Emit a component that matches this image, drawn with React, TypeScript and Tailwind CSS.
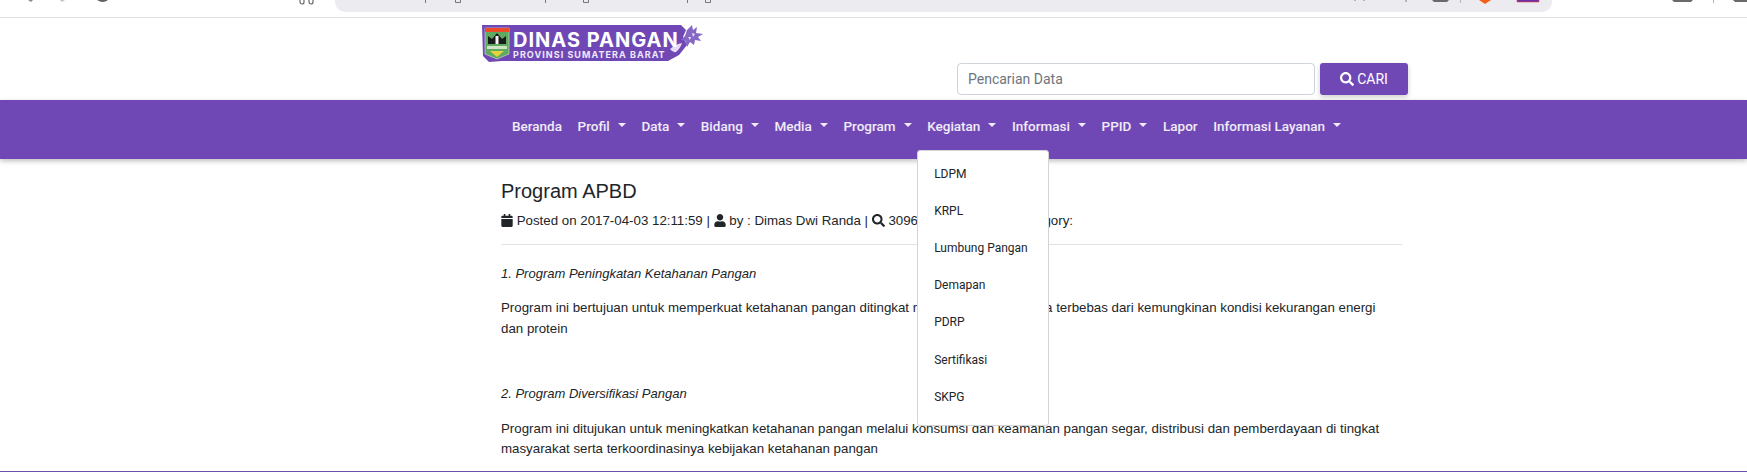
import React from 'react';
import { FaCalendar, FaUser, FaSearch } from 'react-icons/fa';

const navItems = [
  { label: 'Beranda', caret: false },
  { label: 'Profil', caret: true },
  { label: 'Data', caret: true },
  { label: 'Bidang', caret: true },
  { label: 'Media', caret: true },
  { label: 'Program', caret: true },
  { label: 'Kegiatan', caret: true, open: true },
  { label: 'Informasi', caret: true },
  { label: 'PPID', caret: true },
  { label: 'Lapor', caret: false },
  { label: 'Informasi Layanan', caret: true },
];

const kegiatan = ['LDPM', 'KRPL', 'Lumbung Pangan', 'Demapan', 'PDRP', 'Sertifikasi', 'SKPG'];

// toolbar icons of the browser, only their lower edge is in the picture
function ChromeBits() {
  return (
    <svg width="1747" height="17" viewBox="0 0 1747 17" className="absolute left-0 top-0">
      <path d="M28 0h5l-2 2z" fill="#8a8a8a" />
      <path d="M60 0h5l-3 2z" fill="#c4c4c4" />
      <path d="M97 0h11q-5 4-11 0z" fill="#5f6368" />
      <path d="M300 0v2a2 2 0 0 0 4 0v-2M309 0v2a2 2 0 0 0 4 0v-2" fill="none" stroke="#6b6b6b" strokeWidth="1.2" />
      <g fill="none" stroke="#777" strokeWidth="1">
        <path d="M425.5 0v3M545.5 0v3M687.5 0v3" />
        <path d="M455.5 0v2.5h5v-2.500M583.500 0v2.500h5v-2.500M705.500 0v2.500h5v-2.500" />
      </g>
      <path d="M1354 0h2v1h-2zM1363 0h2v1h-2zM1405 0h2v2h-2zM1460 0h1v3h-1zM1713 0h1v3h-1z" fill="#b5b5b5" />
      <path d="M1432 0h17l-2 2h-13zM1672 0h21l-2 2h-17zM1733 0h14v2h-12z" fill="#6a6a6a" />
      <path d="M1479 0h12l-6 4z" fill="#f4601c" />
      <rect x="1517" y="0" width="22" height="2" fill="#6f2da8" />
      <path d="M1517 0v2h22v-2" fill="none" stroke="#e0533a" strokeWidth="0.6" />
    </svg>
  );
}

function Logo() {
  return (
    <svg width="224" height="40" viewBox="0 0 224 40" className="block">
      <path d="M0 0H199L204 5L201 12L205 20L197 30L186 36L20 36L7 37L1 31Z" fill="#7048b6" />
      <path d="M205 5l5-5l1 5l4-3l-1 6l7 1l-5 3l3 4l-6-1l-1 5l-4-3l-3 5l-2-7l-4 0l4-4z" fill="#8468c4" />
      <path d="M210 8l3 1l-2 3z M206 12l3 0l-1 3z" fill="#e6dcf5" />
      <path d="M188 24q6-5 12-6q-2 6-6 9q-3 1-6-3z" fill="#e6dcf5" />
      <path d="M3 3H27V29L15 34L3 29Z" fill="#5faa62" stroke="#d9e6c8" strokeWidth="0.6" />
      <rect x="3" y="3" width="24" height="4" fill="#ee4b2b" />
      <path d="M6 19V11L10 14L15 8L20 14L24 11V19Z" fill="#1b1b1b" />
      <rect x="13.500" y="11" width="3" height="8" fill="#f4f4f4" />
      <rect x="5" y="21" width="20" height="3" fill="#cfe3c4" />
      <path d="M8 26H22L15 32Z" fill="#e6d23a" />
      <text x="31" y="22" fill="#fff" fontFamily="Inter, sans-serif" fontWeight="700" fontSize="20" letterSpacing="1">DINAS PANGAN</text>
      <text x="31" y="33" fill="#efe9fa" fontFamily="Inter, sans-serif" fontWeight="700" fontSize="9" letterSpacing="1.05">PROVINSI SUMATERA BARAT</text>
    </svg>
  );
}

export default function App() {
  return (
    <div className="relative h-[472px] overflow-hidden bg-white flex flex-col font-['Liberation_Sans',sans-serif] text-[#212529]">
      {/* browser chrome, cut off at the top */}
      <div className="h-[18px] shrink-0 border-b border-[#e3e3e3] pl-[335px] pr-[195px]">
        <div className="h-3 bg-[#ecebf0] rounded-b-[10px]"></div>
      </div>
      <ChromeBits />

      {/* header */}
      <div className="h-[82px] shrink-0 pl-[482px] pt-[7px] relative">
        <Logo />
        <div className="absolute left-[957px] top-[45px] flex gap-[5px]">
          <input
            placeholder="Pencarian Data"
            className="w-[358px] h-8 border border-[#ced4da] rounded-[4px] px-[10px] text-[14px] font-['Roboto',sans-serif] placeholder:text-[#6c757d] outline-none"
          />
          <button className="w-[88px] h-8 bg-[#7048b6] rounded-[3px] text-white text-[14px] font-['Roboto',sans-serif] flex items-center justify-center gap-[3px] shadow-[0_2px_5px_rgba(0,0,0,0.2)]">
            <FaSearch className="w-[14px] h-[14px]" /> CARI
          </button>
        </div>
      </div>

      {/* nav */}
      <div className="h-[59px] shrink-0 bg-[#7048b6] shadow-[0_2px_5px_rgba(0,0,0,0.26)] relative z-10 pl-[512px] pt-[16px]">
        <ul className="flex gap-[15.6px] text-[13.5px] font-medium text-white/90 font-['Roboto',sans-serif] leading-[20px]">
          {navItems.map((item) => (
            <li key={item.label} className="relative flex items-center">
              {item.label}
              {item.caret && (
                <span className="ml-[8px] mb-[3px] border-t-[4px] border-x-[4px] border-t-white/90 border-x-transparent"></span>
              )}
              {item.open && (
                <div className="absolute left-[-10px] top-[34px] w-[132px] h-[276px] bg-white border border-[#d4d4d4] rounded-[3px] pt-[4px] text-[12px] font-normal text-[#212529]">
                  {kegiatan.map((k) => (
                    <div key={k} className="h-[37.2px] pl-4 flex items-center">{k}</div>
                  ))}
                </div>
              )}
            </li>
          ))}
        </ul>
      </div>

      {/* article */}
      <div className="flex-1 pl-[501px] w-[1402px] pt-[20px] text-[13.3px] leading-[20.5px]">
        <h1 className="text-[20px] leading-[25px]">Program APBD</h1>
        <p className="mt-[7px]">
          <FaCalendar className="inline w-[12px] h-[13px] mb-[2px]" /> Posted on 2017-04-03 12:11:59 | <FaUser className="inline w-[12px] h-[13px] mb-[2px]" /> by : Dimas Dwi Randa | <FaSearch className="inline w-[13px] h-[13px] mb-[2px]" /> 3096 times viewed | <span className="ml-[6px]">Category:</span>
        </p>
        <hr className="mt-[12px] border-[#e2e2e2]" />
        <p className="mt-[19px] italic text-[13px]">1. Program Peningkatan Ketahanan Pangan</p>
        <p className="mt-[14px] w-[890px]">Program ini bertujuan untuk memperkuat ketahanan pangan ditingkat rumah tangga sehingga terbebas dari kemungkinan kondisi kekurangan energi dan protein</p>
        <p className="mt-[45px] italic text-[13px]">2. Program Diversifikasi Pangan</p>
        <p className="mt-[14px] w-[890px]">Program ini ditujukan untuk meningkatkan ketahanan pangan melalui konsumsi dan keamanan pangan segar, distribusi dan pemberdayaan di tingkat masyarakat serta terkoordinasinya kebijakan ketahanan pangan</p>
      </div>

      {/* edge of the window */}
      <div className="absolute left-0 right-0 bottom-0 h-px bg-[#6e4fb0]"></div>
    </div>
  );
}
